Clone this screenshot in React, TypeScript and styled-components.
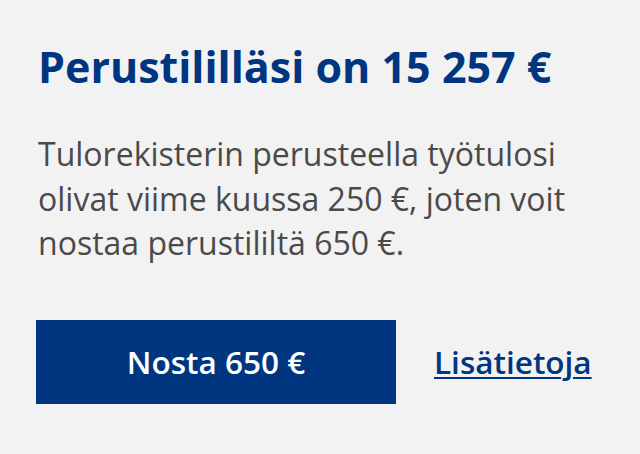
import styled, { createGlobalStyle } from 'styled-components';

const GlobalStyle = createGlobalStyle`
  html, body {
    margin: 0;
    padding: 0;
    background-color: #f2f2f2;
  }
  body {
    font-family: "Open Sans", Lato, sans-serif;
  }
`;

const App = (): JSX.Element => {
  return (
    <>
      <GlobalStyle />
      <Card>
        <Title>Perustililläsi on 15 257 €</Title>
        <Body>
          Tulorekisterin perusteella työtulosi olivat viime kuussa 250 €, joten voit nostaa perustililtä 650 €.
        </Body>
        <Actions>
          <PrimaryBtn type="button">Nosta 650 €</PrimaryBtn>
          <MoreLink href="#">Lisätietoja</MoreLink>
        </Actions>
      </Card>
    </>
  );
};

export default App;

const Card = styled.div`
  display: flex;
  flex-direction: column;
  width: 640px;
  height: 454px;
  box-sizing: border-box;
  padding: 37px 36px 0 38px;

  background-color: #f2f2f2;
`;
const Title = styled.h1`
  margin: 0;
  font-size: 43px;
  font-weight: 700;
  line-height: 60px;
  color: #003580;
`;
const Body = styled.p`
  margin: 35px 0 0;
  max-width: 545px;
  font-size: 32px;
  line-height: 44.5px;
  color: #4a4a4a;
`;
const Actions = styled.div`
  display: flex;
  align-items: center;
  gap: 38px;
  margin: 54px 0 0 -2px;
`;
const PrimaryBtn = styled.button`
  width: 360px;
  height: 84px;
  border: none;
  padding: 0;

  background-color: #003580;
  color: #fff;
  font-family: inherit;
  font-size: 31.5px;
  font-weight: 600;
  cursor: pointer;
`;
const MoreLink = styled.a`
  color: #003580;
  font-size: 31.5px;
  font-weight: 600;
  text-decoration: underline;
  text-decoration-thickness: 2px;
  text-underline-offset: 3px;
`;
